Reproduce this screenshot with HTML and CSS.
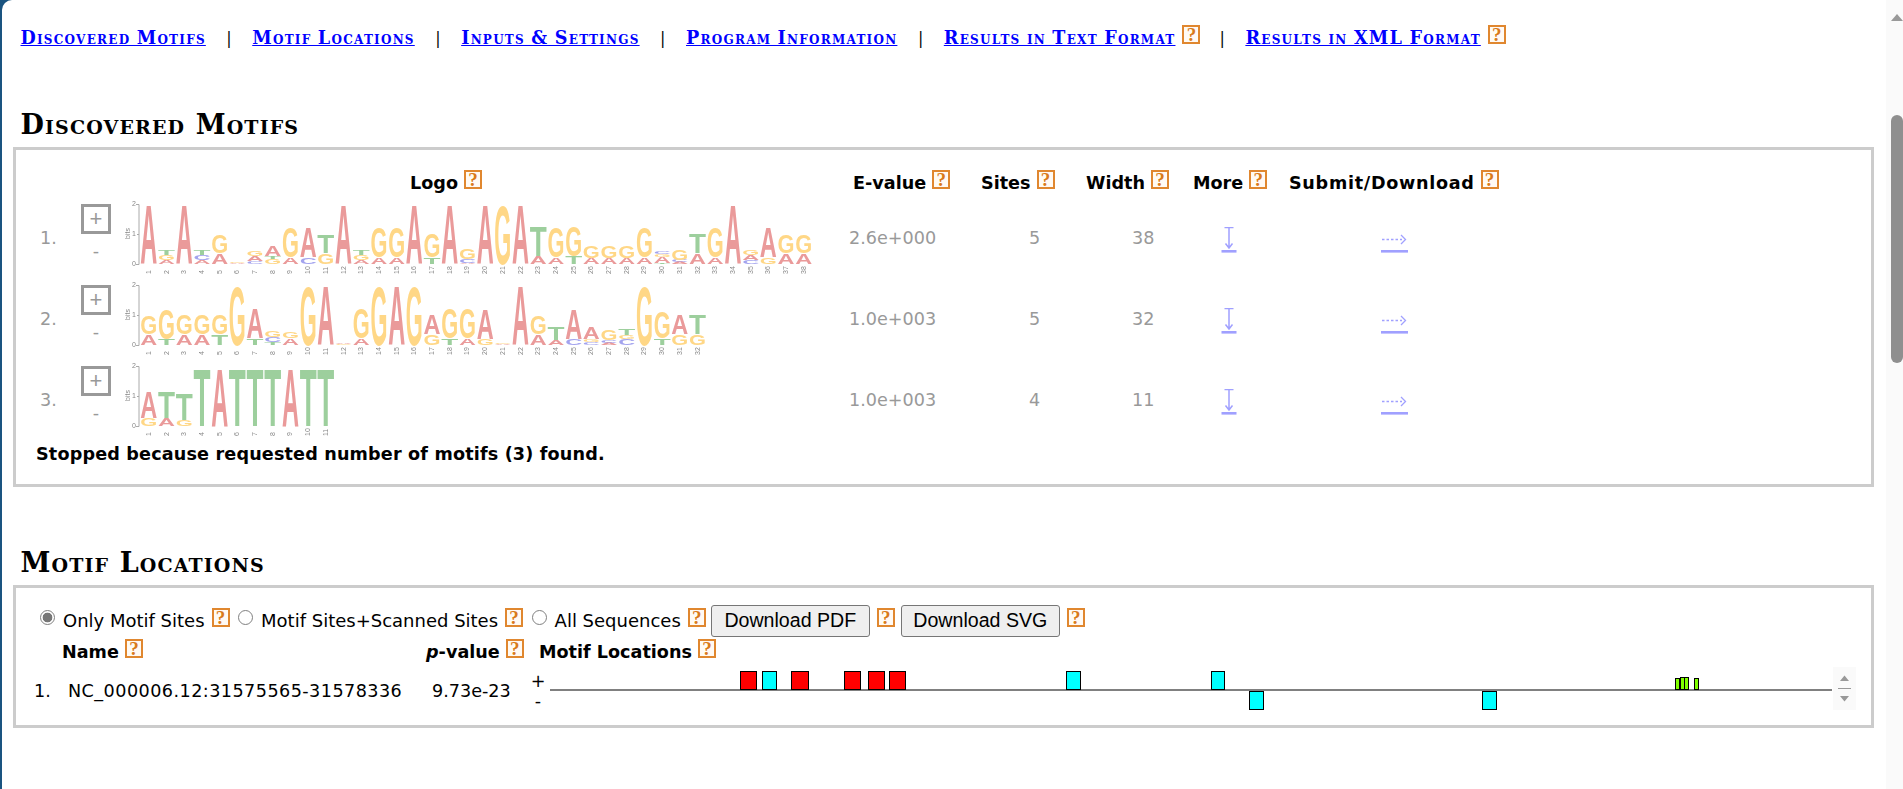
FILE: index.html
```html
<!DOCTYPE html>
<html lang="en">
<head>
<meta charset="utf-8">
<title>MEME</title>
<link rel="stylesheet" href="styles.css">
</head>
<body>
<div class="window">
  <main class="page">
    <nav class="nav">
      <a href="#motifs">Discovered Motifs</a><span class="sep">|</span>
      <a href="#locations">Motif Locations</a><span class="sep">|</span>
      <a href="#inputs">Inputs &amp; Settings</a><span class="sep">|</span>
      <a href="#info">Program Information</a><span class="sep">|</span>
      <a href="#text">Results in Text Format</a><span class="help">?</span><span class="sep">|</span>
      <a href="#xml">Results in XML Format</a><span class="help">?</span>
    </nav>

    <h2 class="title first" id="motifs">Discovered Motifs</h2>
    <section class="panel panel-motifs">
      <div class="motifs">
        <div class="h h-logo"><span>Logo</span><span class="help">?</span></div>
        <div class="h h-ev"><span>E-value</span><span class="help">?</span></div>
        <div class="h h-sites"><span>Sites</span><span class="help">?</span></div>
        <div class="h h-width"><span>Width</span><span class="help">?</span></div>
        <div class="h h-more"><span>More</span><span class="help">?</span></div>
        <div class="h h-sub"><span>Submit/Download</span><span class="help">?</span></div>

        <div class="num">1.</div>
        <div class="toggle"><span class="plus">+</span><span class="minus">-</span></div>
        <div class="logo-cell"><svg class="logo" data-motif="0" width="690" height="78"></svg></div>
        <div class="val ev">2.6e+000</div><div class="val sites">5</div><div class="val width">38</div>
        <div class="act act-more"><svg class="ico" width="16" height="26"><use href="#i-down"/></svg></div>
        <div class="act"><svg class="ico" width="27" height="26"><use href="#i-right"/></svg></div>

        <div class="num">2.</div>
        <div class="toggle"><span class="plus">+</span><span class="minus">-</span></div>
        <div class="logo-cell"><svg class="logo" data-motif="1" width="690" height="78"></svg></div>
        <div class="val ev">1.0e+003</div><div class="val sites">5</div><div class="val width">32</div>
        <div class="act act-more"><svg class="ico" width="16" height="26"><use href="#i-down"/></svg></div>
        <div class="act"><svg class="ico" width="27" height="26"><use href="#i-right"/></svg></div>

        <div class="num">3.</div>
        <div class="toggle"><span class="plus">+</span><span class="minus">-</span></div>
        <div class="logo-cell"><svg class="logo" data-motif="2" width="690" height="78"></svg></div>
        <div class="val ev">1.0e+003</div><div class="val sites">4</div><div class="val width">11</div>
        <div class="act act-more"><svg class="ico" width="16" height="26"><use href="#i-down"/></svg></div>
        <div class="act"><svg class="ico" width="27" height="26"><use href="#i-right"/></svg></div>
      </div>
      <p class="stopped">Stopped because requested number of motifs (3) found.</p>
    </section>

    <h2 class="title second" id="locations">Motif Locations</h2>
    <section class="panel panel-loc">
      <div class="controls">
        <input class="radio" type="radio" name="scan" checked>
        <span class="lbl">Only Motif Sites</span><span class="help">?</span>
        <input class="radio" type="radio" name="scan">
        <span class="lbl">Motif Sites+Scanned Sites</span><span class="help">?</span>
        <input class="radio" type="radio" name="scan">
        <span class="lbl">All Sequences</span><span class="help">?</span>
        <button class="btn" type="button">Download PDF</button><span class="help">?</span>
        <button class="btn" type="button">Download SVG</button><span class="help">?</span>
      </div>
      <div class="seqs">
        <div class="sh sh-blank"></div>
        <div class="sh"><span>Name</span><span class="help">?</span></div>
        <div class="sh"><span><i>p</i>-value</span><span class="help">?</span></div>
        <div class="sh"><span>Motif Locations</span><span class="help">?</span></div>

        <div class="row-n">1.</div>
        <div class="row-name">NC_000006.12:31575565-31578336</div>
        <div class="row-p">9.73e-23</div>
        <div class="row-track">
          <div class="strands"><span>+</span><span>-</span></div>
          <svg class="track" width="1308" height="50">
            <rect class="line" x="2" y="22" width="1282" height="2"/>
            <rect class="red" x="192.500" y="4.500" width="16" height="18"/>
            <rect class="cyan" x="214.500" y="4.500" width="14" height="18"/>
            <rect class="red" x="243.500" y="4.500" width="17" height="18"/>
            <rect class="red" x="296.500" y="4.500" width="16" height="18"/>
            <rect class="red" x="320.500" y="4.500" width="16" height="18"/>
            <rect class="red" x="341.500" y="4.500" width="16" height="18"/>
            <rect class="cyan" x="518.500" y="4.500" width="14" height="18"/>
            <rect class="cyan" x="663.500" y="4.500" width="13" height="18"/>
            <rect class="cyan" x="701.500" y="24.500" width="14" height="18"/>
            <rect class="cyan" x="934.500" y="24.500" width="14" height="18"/>
            <rect class="lime" x="1127.500" y="11.500" width="4" height="11"/>
            <rect class="lime" x="1132.500" y="10.500" width="4" height="12"/>
            <rect class="lime" x="1136.500" y="10.500" width="4" height="12"/>
            <rect class="lime" x="1146.500" y="11.500" width="4" height="11"/>
            <rect class="pad" x="1285" y="0" width="23" height="43"/>
            <path class="pad-mark" d="M1292 14l4.500-5.500 4.500 5.500zM1290 21h13v1h-13zM1292 29h9l-4.500 5.500z"/>
          </svg>
        </div>
      </div>
    </section>
  </main>
  <aside class="scrollbar">
    <div class="sb-up"></div>
    <div class="sb-thumb"></div>
  </aside>
</div>

<svg class="defs" width="0" height="0" aria-hidden="true">
  <symbol id="i-down" viewBox="0 0 16 26">
    <path d="M3.500 .5h9M8 .5v20M4.500 16.500L8 21l3.500-4.500" fill="none" stroke="#a0a0ff" stroke-width="1.500"/>
    <rect x="0.500" y="23" width="15" height="2.600" fill="#a0a0ff"/>
  </symbol>
  <symbol id="i-right" viewBox="0 0 27 26">
    <path d="M1 12.500h20" fill="none" stroke="#a0a0ff" stroke-width="1.500" stroke-dasharray="2.500 2"/>
    <path d="M20 8l4.500 4.500L20 17" fill="none" stroke="#a0a0ff" stroke-width="1.300"/>
    <rect x="0" y="23" width="27" height="2.600" fill="#a0a0ff"/>
  </symbol>
</svg>
<script src="logo.js"></script>
</body>
</html>
```
FILE: styles.css
```css
* { box-sizing: border-box; }
html, body { margin: 0; height: 789px; overflow: hidden; }
body { background: #1a5480; font-family: "DejaVu Sans", Verdana, sans-serif; font-size: 17.6px; color: #000; }
.window { display: flex; height: 789px; margin-left: 2px; background: #fff; border-top-left-radius: 10px; overflow: hidden; }
.page { width: 1884px; flex: none; padding-left: 11px; padding-top: 25px; }
.defs { position: absolute; }

.nav { display: flex; align-items: flex-start; height: 24px; padding-left: 7.500px; font-family: "DejaVu Serif", "Liberation Serif", serif; font-weight: bold; font-variant: small-caps; font-size: 17.6px; line-height: 22px; }
.nav a { color: #00f; text-decoration: underline; margin-top: 2px; letter-spacing: 1.250px; word-spacing: -1px; }
.sep { margin: 3px 20.500px 0; font-size: 16px; font-variant: normal; font-weight: normal; color: #000; }
.nav .help { margin-left: 7px; margin-top: 0; }
.nav .help + .sep { margin-left: 19px; }

.help { display: inline-flex; align-items: center; justify-content: center; width: 18px; height: 19px; flex: none; border: 2px solid #e0872f; background: #fffaf4; color: #d97a1a; font: bold 19px/15px "Liberation Serif", serif; font-variant: normal; overflow: hidden; letter-spacing: 0; }

.title { margin: 0; padding-left: 7.500px; font-family: "DejaVu Serif", "Liberation Serif", serif; font-weight: bold; font-variant: small-caps; font-size: 27px; letter-spacing: 1.130px; line-height: 30px; }
.title.first { margin-top: 61px; height: 37px; }
.title.second { margin-top: 61px; height: 37px; }

.panel { width: 1861px; border: 3px solid #ccc; background: #fff; }
.panel-motifs { height: 340px; padding-top: 20px; }
.panel-loc { height: 143px; padding-top: 17px; }

.motifs { display: grid; grid-template-columns: 54px 52px 723px 130px 103px 107px 96px 226px; grid-template-rows: 26px 81px 81px 81px; justify-content: start; }
.h { display: flex; align-items: flex-start; font-weight: bold; line-height: 22px; }
.h > span:first-child { margin-top: 2px; }
.h .help { margin-left: 6px; }
.h-logo { grid-column: 1 / 4; padding-left: 394px; }
.h-ev { padding-left: 8px; }
.h-sites { padding-left: 6px; }
.h-width { padding-left: 8px; }
.h-more { padding-left: 8px; }
.h-sub { padding-left: 8px; letter-spacing: .7px; }

.num { padding: 31px 0 0 24px; color: #999; line-height: 22px; }
.toggle { display: flex; flex-direction: column; align-items: center; padding-top: 8px; color: #999; }
.plus { display: flex; align-items: center; justify-content: center; width: 30px; height: 30px; border: 3px solid #999; font: 22px/20px "Liberation Sans", sans-serif; }
.minus { margin-top: 7px; line-height: 20px; }
.logo-cell { padding: 2px 0 0 3px; }
.logo { display: block; filter: blur(.7px); }
.logo .axis { stroke: #aaa; stroke-width: 1; fill: none; }
.logo .tick { fill: #888; font: 7px "Liberation Sans", sans-serif; }
.logo .letter { font: bold 100px "Liberation Sans", Arial, sans-serif; text-anchor: middle; }
.logo .A { fill: #ea9a9a; }
.logo .C { fill: #a3a3ee; }
.logo .G { fill: #ffd786; }
.logo .T { fill: #9dcf9d; }

.val { padding-top: 31px; color: #999; line-height: 22px; }
.ev { padding-left: 4px; }
.sites, .width { padding-left: 54px; }
.act { display: flex; justify-content: center; padding-top: 31px; }
.act-more { padding-right: 8px; }
.ico { display: block; }

.stopped { margin: 4px 0 0 20px; font-size: 17.6px; letter-spacing: .16px; font-weight: bold; line-height: 22px; }

.controls { display: flex; align-items: flex-start; padding-left: 24px; height: 34px; }
.radio { appearance: none; width: 15px; height: 15px; margin: 5px 8px 0 0; flex: none; border: 1.500px solid #808080; border-radius: 50%; background: #fff; }
.radio:checked { background: radial-gradient(circle, #777 0 4.500px, #fff 5.200px); }
.lbl { font-size: 18px; line-height: 22px; margin-top: 5px; }
.controls .help { margin: 3px 8.500px 0 7px; }
.controls .btn + .help { margin-right: 6px; }
.controls .lbl + .help + .btn { margin-left: -3.500px; }
.btn { width: 159px; height: 32px; padding: 0 0 2px; border: 1px solid #767676; border-radius: 3px; background: #efefef; color: #000; font: 19.6px "Liberation Sans", Arial, sans-serif; }

.seqs { display: grid; grid-template-columns: 46px 364px 113px 1317px; grid-template-rows: 28px 50px; }
.sh { display: flex; align-items: flex-start; font-weight: bold; line-height: 22px; }
.sh > span:first-child { margin-top: 2px; }
.sh .help { margin-left: 6px; }
.row-n, .row-name, .row-p { padding-top: 13px; line-height: 22px; }
.row-n { padding-left: 18px; }
.row-name { padding-left: 6px; letter-spacing: .45px; }
.row-p { padding-left: 6px; }
.row-track { display: flex; align-items: flex-start; margin-left: -6px; }
.strands { display: flex; flex-direction: column; width: 15px; padding: 4px 5px 0 0; line-height: 20px; font-size: 17.6px; align-items: center; }
.track { display: block; }
.track .line { fill: #808080; }
.track rect.red, .track rect.cyan, .track rect.lime { stroke: #000; stroke-width: 1; }
.track .red { fill: #f00; }
.track .cyan { fill: #0ff; }
.track .lime { fill: #80ff00; }
.track .pad { fill: #fafafa; }
.track .pad-mark { fill: #999; }

.scrollbar { flex: 1; background: #fafafa; padding-left: 5px; }
.sb-up { width: 0; height: 0; margin: 14px 0 0 0; border-left: 6px solid transparent; border-right: 6px solid transparent; border-bottom: 7px solid #999; }
.sb-thumb { width: 12px; height: 248px; margin-top: 94px; border-radius: 6px; background: #8f8f8f; }
```
FILE: logo.js
```js
var MOTIFS = [
  ["A60","A4G5T5","A60","A4C5T5","A11G19","A1G1","C3A5G5","G5T3A10","A7G30","C7A30","G11T19","A60","A4G5T5","A7G30","A7G30","A60","T7G24","A60","A1C4G10","A60","G60","A60","A8T30","A7G30","T8G30","A6G12","A6G12","A6G12","A7G30","T1A6G3C3","A2C2G10","A11T20","A7G30","A60","C4A5G5","G7A30","A11G19","A11G19"],
  ["A11G19","T6G30","A11G20","A11G20","T11G20","G60","T7A30","T3C5G6","A7G6","G60","A60","G1A1","A7G30","G60","A60","G60","G11A20","T7G30","A7G30","G6A30","A1G1","A60","A11G19","A5T13","C6A30","C3G3A12","A2C3G10","C6G4T6","G60","T7G26","G11A20","G11T20"],
  ["G8A26","A8T26","G6T26","T58","A58","T58","T58","T58","A58","T58","T58"]
];
var NS = "http://www.w3.org/2000/svg";
var ADV = { A: 72.2, C: 72.2, G: 77.8, T: 61.1 };
var BASE = 66, X0 = 15, COL = 17.7;

function el(name, attrs, text) {
  var node = document.createElementNS(NS, name);
  for (var k in attrs) node.setAttribute(k, attrs[k]);
  if (text !== undefined) node.textContent = text;
  return node;
}

document.querySelectorAll(".logo").forEach(function (svg) {
  var cols = MOTIFS[+svg.dataset.motif];
  svg.appendChild(el("path", { "class": "axis", d: "M11 6.500h3V66.500h-3M12 36.500h2" }));
  [["2", 6], ["1", 36], ["0", 66]].forEach(function (t) {
    svg.appendChild(el("text", { "class": "tick", x: 7, y: t[1] + 2 }, t[0]));
  });
  svg.appendChild(el("text", { "class": "tick", transform: "translate(5 41) rotate(-90)" }, "bits"));

  cols.forEach(function (col, i) {
    var cx = X0 + COL * (i + 0.5), y = BASE;
    (col.match(/[ACGT]\d+/g) || []).forEach(function (part) {
      var letter = part[0], h = +part.slice(1);
      svg.appendChild(el("text", {
        "class": "letter " + letter,
        transform: "translate(" + cx.toFixed(2) + " " + y + ") scale(" + (COL * 0.96 / ADV[letter]).toFixed(4) + " " + (h / 71.6).toFixed(4) + ")"
      }, letter));
      y -= h;
    });
    svg.appendChild(el("text", {
      "class": "tick",
      transform: "translate(" + (cx + 2).toFixed(2) + " 76) rotate(-90)"
    }, String(i + 1)));
  });
});
```
